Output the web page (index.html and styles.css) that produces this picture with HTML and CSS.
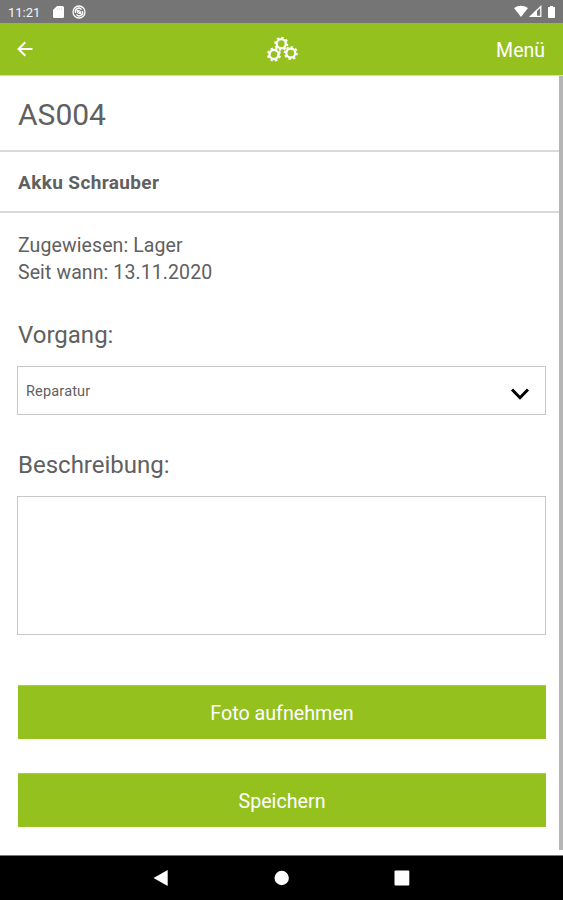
FILE: index.html
```html
<!DOCTYPE html>
<html lang="de">
<head>
<meta charset="utf-8">
<title>AS004</title>
<link rel="stylesheet" href="styles.css">
</head>
<body>
<div class="status">
  <span class="clock">11:21</span>
  <svg class="sd" width="11" height="12" viewBox="0 0 11 12"><path fill="#fff" d="M4 0h5.500Q11 0 11 1.500V10.500Q11 12 9.500 12H1.500Q0 12 0 10.500V4Z"/><path d="M4.300 2v2M6.500 2v2M8.700 2v2" stroke="#ccc" stroke-width=".6"/></svg>
  <svg class="sync" width="14" height="14" viewBox="0 0 14 14" fill="none" stroke="#fff"><circle cx="7" cy="7" r="6" stroke-width="1.300"/><path d="M3.800 8A3.300 3.300 0 0 1 9.500 4.700M10.200 6A3.300 3.300 0 0 1 4.500 9.300M5 5.300l4 3.400" stroke-width="1.400"/><circle cx="7" cy="7" r="1.500" stroke-width="1"/></svg>
  <svg class="signals" width="44" height="14" viewBox="0 0 44 14"><path fill="#fff" d="M0 3Q7-1.500 14 3L7 12Z"/><path fill="none" stroke="#fff" stroke-width="1.300" d="M16.500 11.400 26.800 1.500V11.400Z"/><path fill="#fff" d="M15.500 12 23 4.500V12Z"/><path fill="#fff" d="M36 1h3v1h2v10q0 1-1 1h-5q-1 0-1-1V2h2Z"/></svg>
</div>
<header class="bar">
  <svg class="back" width="16" height="16" viewBox="0 0 16 16" fill="none" stroke="#fff" stroke-width="2"><path d="M15.500 8H2M8.300 1.200 1.500 8l6.800 6.800"/></svg>
  <svg class="gears" width="32" height="26" viewBox="0 0 32 26">
    <defs><g id="gear" fill="none" stroke="#fff"><circle r="4.500" stroke-width="2.300"/><circle r="6.100" stroke-width="1.900" pathLength="80" stroke-dasharray="5 5"/></g></defs>
    <use href="#gear" transform="translate(14.300 7.700)"/><use href="#gear" transform="translate(7 18.500) rotate(12)"/><use href="#gear" transform="translate(23.800 17)"/>
  </svg>
  <span class="menu">Menü</span>
</header>
<main class="page">
  <h1 class="code"><span>AS004</span></h1>
  <h2 class="name"><span>Akku Schrauber</span></h2>
  <div class="info"><p class="owner">Zugewiesen: Lager</p><p class="since">Seit wann: 13.11.2020</p></div>
  <div class="label">Vorgang:</div>
  <div class="select"><span>Reparatur</span><svg width="20" height="14" viewBox="0 0 20 14" fill="none" stroke="#000" stroke-width="3"><path d="M2 2.500 10 10.700 18 2.500"/></svg></div>
  <div class="label">Beschreibung:</div>
  <div class="textarea"></div>
  <div class="button photo"><span>Foto aufnehmen</span></div>
  <div class="button save"><span>Speichern</span></div>
  <div class="scrollbar"></div>
</main>
<nav class="nav">
  <svg width="563" height="44" viewBox="0 0 563 44" fill="#fff"><path d="M153.500 22 167.700 14V30Z"/><circle cx="281.700" cy="22" r="7.200"/><rect x="394.500" y="14.500" width="14.800" height="15" rx="1"/></svg>
</nav>
</body>
</html>
```
FILE: styles.css
```css
* { box-sizing: border-box; margin: 0; padding: 0; }
body { width: 563px; height: 900px; display: flex; flex-direction: column; overflow: hidden; background: #fff; color: #606060; font-family: Roboto, "Liberation Sans", sans-serif; }
svg { display: block; flex: none; }
.status { height: 23px; flex: none; display: flex; align-items: center; background: #757575; padding: 1px 0 0 8px; color: #f4f4f4; }
.clock { font-size: 13px; width: 45px; }
.sync { margin-left: 8px; }
.signals { margin-left: auto; margin-right: 5px; }
.bar { height: 53px; flex: none; display: grid; grid-template-columns: 1fr 32px 1fr; align-items: center; background: #95c11f; border-bottom: 1px solid #d0e49f; padding: 0 18px 0 18px; color: #fff; }
.back { margin-left: -1px; }
.gears { margin-left: 1px; }
.menu { justify-self: end; font-size: 19.5px; padding-top: 3px; }
.page { position: relative; height: 779px; flex: none; }
.code { height: 76px; border-bottom: 2px solid #dadada; padding: 20px 18px 0; font-size: 30px; line-height: 37px; font-weight: 400; }
.name { height: 61px; border-bottom: 2px solid #dadada; padding: 19px 18px 0; font-size: 19px; line-height: 24px; font-weight: 700; letter-spacing: .38px; }
.info { padding: 19px 18px 0; font-size: 19.5px; line-height: 27px; letter-spacing: .1px; }
.label { padding: 34px 18px 0; font-size: 24px; line-height: 32px; }
.info + .label { padding-top: 33px; }
.select { height: 49px; margin: 15px 17px 0; border: 1px solid #c8c8c8; display: flex; align-items: center; justify-content: space-between; padding: 0 15px 0 8px; font-size: 14.5px; letter-spacing: .17px; }
.select span { padding-top: 2px; }
.select svg { margin-top: 6px; }
.textarea { height: 139px; margin: 15px 17px 0; border: 1px solid #c8c8c8; }
.button { height: 54px; margin: 50px 17px 0 18px; background: #95c11f; border-top: 1px solid #a7cc48; color: #fff; font-size: 19.7px; display: flex; align-items: center; justify-content: center; padding-top: 2px; }
.save { margin-top: 34px; }
.scrollbar { position: absolute; right: 0; top: 0; width: 4px; height: 774px; background: #b5b5b5; }
.nav { height: 45px; flex: none; background: #000; border-top: 1px solid #777; }
```
